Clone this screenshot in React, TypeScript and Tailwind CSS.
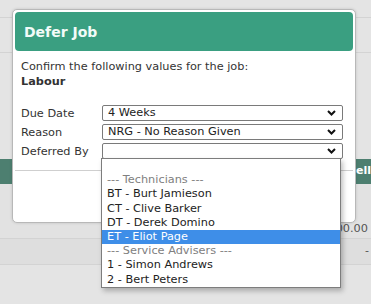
import React from 'react';

const font = { fontFamily: '"DejaVu Sans", Verdana, sans-serif' };

function Chevron() {
  return (
    <svg width="9" height="6" viewBox="0 0 9 6" className="shrink-0">
      <polyline points="1,1 4.5,4.5 8,1" fill="none" stroke="#111" strokeWidth="2" />
    </svg>
  );
}

function FakeSelect({ value }: { value: string }) {
  return (
    <div className="flex h-[16px] w-[241px] items-center justify-between rounded-[2px] border border-[#7a7a7a] bg-white pl-[5px] pr-[6px] text-[11.3px] leading-[14px] text-[#222]">
      <span>{value}</span>
      <Chevron />
    </div>
  );
}

const options: { label: string; group?: boolean; active?: boolean }[] = [
  { label: '' },
  { label: '--- Technicians ---', group: true },
  { label: 'BT - Burt Jamieson' },
  { label: 'CT - Clive Barker' },
  { label: 'DT - Derek Domino' },
  { label: 'ET - Eliot Page', active: true },
  { label: '--- Service Advisers ---', group: true },
  { label: '1 - Simon Andrews' },
  { label: '2 - Bert Peters' },
];

export default function App() {
  const rows = [
    { label: 'Due Date', value: '4 Weeks' },
    { label: 'Reason', value: 'NRG - No Reason Given' },
    { label: 'Deferred By', value: '' },
  ];

  return (
    <div className="relative h-[304px] w-[371px] overflow-hidden bg-[#e4e4e4]" style={font}>
      {/* page behind the dialog */}
      <div className="h-[18px] border-b border-[#d3d3d3]" />
      <div className="h-[35px] border-b border-[#d3d3d3]" />
      <div className="h-[106px]" />
      <div className="flex h-[25px] items-center justify-end bg-[#4d7f70] pr-0 text-[11px] font-bold text-white">
        ell
      </div>
      <div className="flex h-[55px] items-end justify-end border-b border-[#d3d3d3] bg-[#e2e2e2] pb-[2px] pr-[3px] text-[11.3px] leading-[14px] text-[#555]">
        <span>100.00</span>
      </div>
      <div className="flex h-[26px] items-center justify-end border-b border-[#d3d3d3] bg-[#dedede] pr-[2px] text-[11px] text-[#555]">
        -
      </div>

      {/* dialog */}
      <div className="absolute left-[12px] top-[9px] h-[214px] w-[344px] rounded-[5px] border border-[#b8b8b8] bg-white p-[2px] shadow-[0_0_3px_rgba(0,0,0,0.15)]">
        <div className="flex h-[39px] items-center rounded-[4px] bg-[#3a9f81] px-[9px] pt-[2px] text-[14px] font-bold text-[#f2fbf8]">
          Defer Job
        </div>
        <div className="px-[6px] pt-[8px] text-[11.3px] leading-[15px] text-[#333]">
          <div>Confirm the following values for the job:</div>
          <div className="font-bold">Labour</div>
          <div className="mt-[16px] flex flex-col gap-[3px]">
            {rows.map((r) => (
              <div key={r.label} className="flex items-center">
                <span className="w-[81px] shrink-0">{r.label}</span>
                <FakeSelect value={r.value} />
              </div>
            ))}
          </div>
        </div>
        <div className="mt-[11px] border-t border-[#cfcfcf]" />
      </div>

      {/* open option list */}
      <div className="absolute left-[101px] top-[158px] w-[240px] border border-[#7d7d7d] bg-white shadow-[2px_3px_5px_rgba(0,0,0,0.25)] text-[11.3px] leading-[14.2px]">
        {options.map((o, i) => (
          <div
            key={i}
            className={`h-[14.2px] pl-[5px] ${
              o.active ? 'bg-[#3e8ee8] text-white' : o.group ? 'text-[#808080]' : 'text-[#222]'
            }`}
          >
            {o.label}
          </div>
        ))}
      </div>
    </div>
  );
}
